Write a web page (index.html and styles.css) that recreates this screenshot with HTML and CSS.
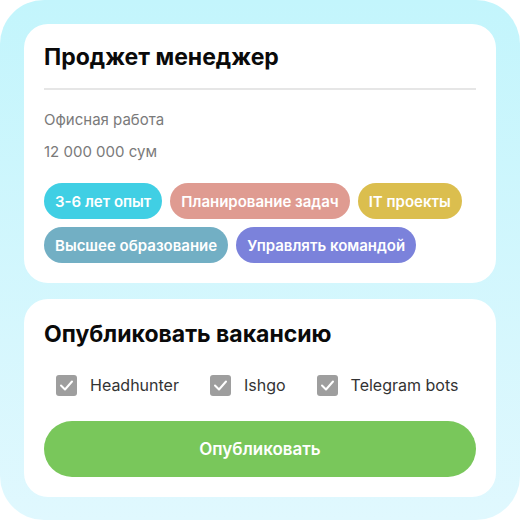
FILE: index.html
```html
<!DOCTYPE html>
<html lang="ru">
<head>
<meta charset="utf-8">
<link rel="stylesheet" href="styles.css">
</head>
<body>
<div class="frame">
  <section class="card card-job">
    <h1 class="title">Проджет менеджер</h1>
    <div class="divider"></div>
    <p class="meta">Офисная работа</p>
    <p class="meta meta-salary">12 000 000 сум</p>
    <div class="tags">
      <span class="tag tag-cyan">3-6 лет опыт</span>
      <span class="tag tag-salmon">Планирование задач</span>
      <span class="tag tag-gold">IT проекты</span>
      <span class="tag tag-steel">Высшее образование</span>
      <span class="tag tag-purple">Управлять командой</span>
    </div>
  </section>
  <section class="card card-publish">
    <h2 class="title">Опубликовать вакансию</h2>
    <div class="checks">
      <label class="check"><span class="box"><svg viewBox="0 0 21 21" width="21" height="21"><polyline points="5,10.5 9,14.5 16,6.5" fill="none" stroke="#fff" stroke-width="2" stroke-linecap="round" stroke-linejoin="round"/></svg></span>Headhunter</label>
      <label class="check"><span class="box"><svg viewBox="0 0 21 21" width="21" height="21"><polyline points="5,10.5 9,14.5 16,6.5" fill="none" stroke="#fff" stroke-width="2" stroke-linecap="round" stroke-linejoin="round"/></svg></span>Ishgo</label>
      <label class="check"><span class="box"><svg viewBox="0 0 21 21" width="21" height="21"><polyline points="5,10.5 9,14.5 16,6.5" fill="none" stroke="#fff" stroke-width="2" stroke-linecap="round" stroke-linejoin="round"/></svg></span>Telegram bots</label>
    </div>
    <button class="publish">Опубликовать</button>
  </section>
</div>
</body>
</html>
```

FILE: styles.css
```css
* { box-sizing: border-box; }
html, body { margin: 0; padding: 0; background: #ffffff; }
body { font-family: Inter, "Noto Sans", sans-serif; }

.frame {
  width: 520px;
  height: 520px;
  border-radius: 44px;
  background: linear-gradient(180deg, #c3f5fc 0%, #e0f8fe 100%);
  padding: 24px;
  display: flex;
  flex-direction: column;
  gap: 16px;
}

.card {
  background: #ffffff;
  border-radius: 24px;
  padding: 20px 20px 20px 20px;
}
.card-publish { padding-top: 22px; }

.title {
  margin: 0;
  font-size: 23px;
  line-height: 26px;
  font-weight: 700;
  color: #0a0a0a;
  letter-spacing: 0;
}

.divider {
  height: 2px;
  background: #e6e6e6;
  margin-top: 18px;
}

.meta {
  margin: 20px 0 0;
  font-size: 15px;
  line-height: 20px;
  color: #7a7a7a;
}
.meta-salary { margin-top: 12px; }

.tags {
  margin-top: 21px;
  display: flex;
  flex-wrap: wrap;
  gap: 8px;
}
.tag {
  height: 36px;
  padding: 0 11px;
  border-radius: 18px;
  display: inline-flex;
  align-items: center;
  font-size: 15px;
  font-weight: 600;
  color: #ffffff;
  white-space: nowrap;
}
.tag-cyan { background: #40cfe4; }
.tag-salmon { background: #df9b91; }
.tag-gold { background: #dbbe4e; }
.tag-steel { background: #72afc4; }
.tag-purple { background: #7b82db; }

.checks {
  margin-top: 28px;
  padding-left: 12px;
  display: flex;
  gap: 31px;
}
.check {
  display: flex;
  align-items: center;
  gap: 13px;
  font-size: 16px;
  color: #333333;
  line-height: 21px;
}
.box {
  width: 21px;
  height: 21px;
  border-radius: 3px;
  background: #9e9e9e;
  display: block;
}
.box svg { display: block; }

.publish {
  margin-top: 25px;
  width: 100%;
  height: 56px;
  border: 0;
  border-radius: 28px;
  background: #79c75b;
  color: #ffffff;
  font-family: Inter, "Noto Sans", sans-serif;
  font-size: 17px;
  font-weight: 600;
  display: block;
}
```
